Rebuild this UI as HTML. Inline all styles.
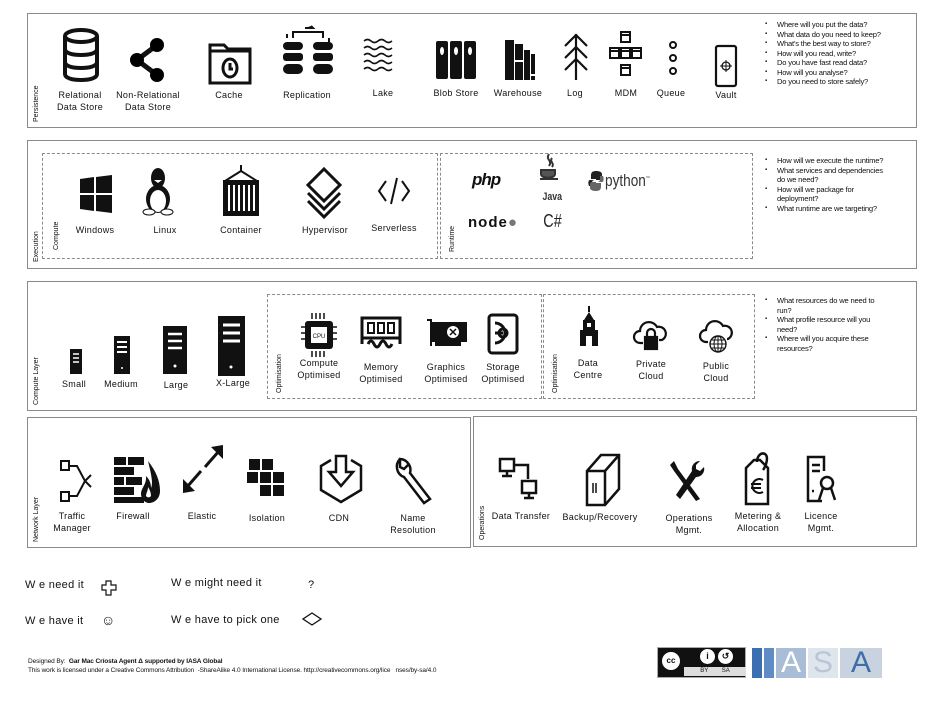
<!DOCTYPE html>
<html><head><meta charset="utf-8"><style>
*{margin:0;padding:0;box-sizing:border-box}
body{width:938px;height:703px;background:#fff;position:relative;overflow:hidden;font-family:"Liberation Sans",sans-serif;color:#111}
.box{position:absolute;border:1.5px solid #8a8a8a}
.dash{position:absolute;border:1px dashed #8a8a8a}
.l{position:absolute;font-size:9px;text-align:center;line-height:12px;transform:translateX(-50%);white-space:nowrap;letter-spacing:.3px}
.v{position:absolute;font-size:7px;transform:rotate(-90deg);transform-origin:left top;white-space:nowrap}
svg{position:absolute;overflow:visible}
ul{position:absolute;font-size:7.6px;line-height:9.5px;list-style:none;letter-spacing:-.2px}
ul li:before{content:"\25AA";position:absolute;left:-12px;font-size:6px}
ul li{position:relative}
.t{position:absolute;font-size:11px;letter-spacing:.3px;white-space:nowrap}
</style></head><body>

<div class="box" style="left:27px;top:13px;width:890px;height:115px"></div>
<div class="box" style="left:27px;top:140px;width:890px;height:129px"></div>
<div class="dash" style="left:42px;top:153px;width:396px;height:106px"></div>
<div class="dash" style="left:440px;top:153px;width:313px;height:106px"></div>
<div class="box" style="left:27px;top:281px;width:890px;height:130px"></div>
<div class="dash" style="left:267px;top:294px;width:275px;height:105px"></div>
<div class="dash" style="left:543px;top:294px;width:212px;height:105px"></div>
<div class="box" style="left:27px;top:417px;width:444px;height:131px"></div>
<div class="box" style="left:473px;top:416px;width:444px;height:131px"></div>

<div class="v" style="left:33px;top:122px">Persistence</div>
<div class="v" style="left:33px;top:262px">Execution</div>
<div class="v" style="left:53px;top:250px">Compute</div>
<div class="v" style="left:449px;top:252px">Runtime</div>
<div class="v" style="left:33px;top:405px">Compute Layer</div>
<div class="v" style="left:276px;top:393px">Optimisation</div>
<div class="v" style="left:552px;top:393px">Optimisation</div>
<div class="v" style="left:33px;top:542px">Network Layer</div>
<div class="v" style="left:479px;top:540px">Operations</div>

<!-- Persistence icons -->
<svg style="left:62px;top:28px" width="38" height="54" viewBox="0 0 38 54" fill="none" stroke="#111" stroke-width="4"><ellipse cx="19" cy="8" rx="16" ry="6"/><path d="M3 8v38c0 4 7 6 16 6s16-2 16-6V8M3 21c0 4 7 6 16 6s16-2 16-6M3 34c0 4 7 6 16 6s16-2 16-6"/></svg>
<svg style="left:130px;top:38px" width="34" height="44" viewBox="0 0 34 44"><path d="M27 7L7 22l20 15" stroke="#111" stroke-width="5" fill="none"/><circle cx="27" cy="7" r="7"/><circle cx="7" cy="22" r="7"/><circle cx="27" cy="37" r="7"/></svg>
<svg style="left:208px;top:41px" width="44" height="44" viewBox="0 0 44 44" fill="none" stroke="#111" stroke-width="3"><path d="M2 4h14l4 4h22v34H2z"/><path d="M2 10h40"/><ellipse cx="22" cy="27" rx="7" ry="9"/><path d="M22 22v6h3"/></svg>
<svg style="left:281px;top:26px" width="54" height="56" viewBox="0 0 54 56"><path d="M12 12V6h30v6" stroke="#111" stroke-width="2" fill="none"/><path d="M24 2h8l-2-2M6 12v-4M48 12v4" stroke="#111" stroke-width="2"/><g fill="#111"><rect x="2" y="16" width="20" height="8" rx="4"/><rect x="2" y="27" width="20" height="8" rx="3"/><rect x="2" y="38" width="20" height="10" rx="5"/><rect x="32" y="16" width="20" height="8" rx="4"/><rect x="32" y="27" width="20" height="8" rx="3"/><rect x="32" y="38" width="20" height="10" rx="5"/></g></svg>
<svg style="left:363px;top:38px" width="32" height="32" viewBox="0 0 32 32" fill="none" stroke="#111" stroke-width="1.6"><path d="M1 3q3.5-3 7 0t7 0 7 0 7 0M1 10q3.5-3 7 0t7 0 7 0 7 0M1 17q3.5-3 7 0t7 0 7 0 7 0M1 24q3.5-3 7 0t7 0 7 0 7 0M1 31q3.5-3 7 0t7 0 7 0 7 0"/></svg>
<svg style="left:436px;top:41px" width="40" height="38" viewBox="0 0 40 38"><g fill="#111"><rect x="0" y="0" width="12" height="38" rx="2"/><rect x="14" y="0" width="12" height="38" rx="2"/><rect x="28" y="0" width="12" height="38" rx="2"/></g><g fill="#fff"><ellipse cx="6" cy="10" rx="2" ry="4"/><ellipse cx="20" cy="10" rx="2" ry="4"/><ellipse cx="34" cy="10" rx="2" ry="4"/></g></svg>
<svg style="left:505px;top:40px" width="30" height="40" viewBox="0 0 30 40" fill="#111"><rect x="0" y="0" width="9" height="40"/><rect x="10" y="4" width="8" height="36"/><rect x="19" y="10" width="6" height="30"/><rect x="26" y="14" width="4" height="20"/><rect x="26" y="36" width="4" height="4"/><rect x="9" y="20" width="10" height="2" fill="#fff"/></svg>
<svg style="left:562px;top:32px" width="28" height="48" viewBox="0 0 28 48" fill="none" stroke="#111" stroke-width="2.2"><path d="M14 2v46M3 14L14 3l11 11M3 26l11-11 11 11M3 38l11-11 11 11"/></svg>
<svg style="left:609px;top:31px" width="34" height="46" viewBox="0 0 34 46" fill="none" stroke="#111" stroke-width="2"><rect x="12" y="1" width="9" height="10"/><rect x="1" y="17" width="9" height="10"/><rect x="12" y="17" width="9" height="10"/><rect x="23" y="17" width="9" height="10"/><rect x="12" y="34" width="9" height="10"/><path d="M12 4h9M12 20h9M1 20h9M23 20h9M12 37h9" /></svg>
<svg style="left:668px;top:41px" width="10" height="36" viewBox="0 0 10 36" fill="none" stroke="#111" stroke-width="2"><circle cx="5" cy="4" r="3"/><circle cx="5" cy="17" r="3"/><circle cx="5" cy="30" r="3"/></svg>
<svg style="left:714px;top:44px" width="24" height="44" viewBox="0 0 24 44" fill="none" stroke="#111" stroke-width="2.2"><rect x="2" y="2" width="20" height="40" rx="2"/><circle cx="12" cy="22" r="4" stroke-width="1.3"/><path d="M12 16v12M6 22h12" stroke-width="1"/></svg>

<div class="l" style="left:80px;top:89px">Relational<br>Data Store</div>
<div class="l" style="left:148px;top:89px">Non-Relational<br>Data Store</div>
<div class="l" style="left:229px;top:89px">Cache</div>
<div class="l" style="left:307px;top:89px">Replication</div>
<div class="l" style="left:383px;top:87px">Lake</div>
<div class="l" style="left:456px;top:87px">Blob Store</div>
<div class="l" style="left:518px;top:87px">Warehouse</div>
<div class="l" style="left:575px;top:87px">Log</div>
<div class="l" style="left:626px;top:87px">MDM</div>
<div class="l" style="left:671px;top:87px">Queue</div>
<div class="l" style="left:726px;top:89px">Vault</div>

<ul style="left:777px;top:20px"><li>Where will you put the data?</li><li>What data do you need to keep?</li><li>What’s the best way to store?</li><li>How will you read, write?</li><li>Do you have fast read data?</li><li>How will you analyse?</li><li>Do you need to store safely?</li></ul>

<!-- Execution -->
<svg style="left:80px;top:175px" width="32" height="38" viewBox="0 0 32 38" fill="#111"><path d="M0 4l14-2v16H0zM16 2l16-2v18H16zM0 20h14v16L0 34zM16 20h16v18l-16-2z"/></svg>
<svg style="left:143px;top:166px" width="30" height="50" viewBox="0 0 30 50"><ellipse cx="15" cy="12" rx="7" ry="10" fill="#111"/><ellipse cx="15" cy="33" rx="12" ry="14" fill="#111"/><ellipse cx="15" cy="35" rx="8" ry="11" fill="#fff"/><ellipse cx="6" cy="46" rx="6" ry="3" fill="#fff" stroke="#111"/><ellipse cx="24" cy="46" rx="6" ry="3" fill="#fff" stroke="#111"/><path d="M11 14h8l-4 3z" fill="#fff"/></svg>
<svg style="left:222px;top:165px" width="38" height="52" viewBox="0 0 38 52" fill="none" stroke="#111" stroke-width="2"><path d="M19 0v6M19 6L3 16M19 6l16 10"/><rect x="2" y="16" width="34" height="34" fill="#111"/><path d="M7 20v26M12 20v26M17 20v26M22 20v26M27 20v26M32 20v26" stroke="#fff" stroke-width="2"/></svg>
<svg style="left:304px;top:167px" width="40" height="52" viewBox="0 0 40 52" fill="none" stroke="#111" stroke-width="3"><path d="M20 2L36 18 20 34 4 18z"/><path d="M4 26l16 16 16-16M4 34l16 16 16-16"/></svg>
<svg style="left:377px;top:176px" width="34" height="30" viewBox="0 0 34 30" fill="none" stroke="#111" stroke-width="2"><path d="M9 5L2 15l7 10M25 5l7 10-7 10M20 2l-6 26"/></svg>
<div class="l" style="left:95px;top:224px">Windows</div>
<div class="l" style="left:165px;top:224px">Linux</div>
<div class="l" style="left:241px;top:224px">Container</div>
<div class="l" style="left:325px;top:224px">Hypervisor</div>
<div class="l" style="left:394px;top:222px">Serverless</div>

<div style="position:absolute;left:472px;top:170px;font:italic bold 17px 'Liberation Sans',sans-serif;letter-spacing:-1px">php</div>
<svg style="left:538px;top:154px" width="22" height="30" viewBox="0 0 22 30" fill="none" stroke="#333" stroke-width="2"><path d="M11 0c-4 6 4 6 0 12M14 4c-3 4 3 5 0 9"/><path d="M3 16h14v4c0 5-14 5-14 0z" fill="#555"/><path d="M2 25h18"/></svg>
<div style="position:absolute;left:540px;top:191px;font:bold 11px 'Liberation Sans',sans-serif;color:#333;transform:scaleX(.8)">Java</div>
<svg style="left:588px;top:171px" width="16" height="20" viewBox="0 0 16 20"><path d="M8 0c-5 0-5 3-5 5v3h5v1H2C0 9 0 13 1 15h3v-3c0-2 1-3 3-3h5c1 0 2-1 2-2V3C14 1 11 0 8 0z" fill="#222"/><path d="M8 20c5 0 5-3 5-5v-3H8v-1h6c2 0 2-4 1-6h-3v3c0 2-1 3-3 3H4c-1 0-2 1-2 2v4c0 2 3 3 6 3z" fill="#666"/></svg>
<div style="position:absolute;left:605px;top:171px;font:17px 'Liberation Sans',sans-serif;color:#333;transform:scaleX(.8);transform-origin:left">python<sup style="font-size:5px">™</sup></div>
<div style="position:absolute;left:468px;top:214px;font:bold 15px 'Liberation Sans',sans-serif;letter-spacing:1px;color:#111">node<span style="color:#777">●</span></div>
<div style="position:absolute;left:541px;top:211px;font:18px 'Liberation Sans',sans-serif;color:#222;transform:scaleX(.8)">C#</div>

<ul style="left:777px;top:156px"><li>How will we execute the runtime?</li><li>What services and dependencies<br>do we need?</li><li>How will we package for<br>deployment?</li><li>What runtime are we targeting?</li></ul>

<!-- Compute layer -->
<svg style="left:70px;top:349px" width="12" height="25" viewBox="0 0 12 25"><rect width="12" height="25" fill="#111"/><path d="M3 5h6M3 9h6M3 13h6" stroke="#fff" stroke-width="1.5"/></svg>
<svg style="left:114px;top:336px" width="16" height="38" viewBox="0 0 16 38"><rect width="16" height="38" fill="#111"/><path d="M3 6h10M3 11h10M3 16h10" stroke="#fff" stroke-width="2"/><circle cx="8" cy="32" r="1" fill="#fff"/></svg>
<svg style="left:163px;top:326px" width="24" height="48" viewBox="0 0 24 48"><rect width="24" height="48" fill="#111"/><path d="M5 8h14M5 15h14M5 22h14" stroke="#fff" stroke-width="2.5"/><circle cx="12" cy="40" r="1.5" fill="#fff"/></svg>
<svg style="left:218px;top:316px" width="27" height="60" viewBox="0 0 27 60"><rect width="27" height="60" fill="#111"/><path d="M5 9h17M5 17h17M5 25h17" stroke="#fff" stroke-width="3"/><circle cx="13" cy="51" r="1.5" fill="#fff"/></svg>
<div class="l" style="left:74px;top:378px">Small</div>
<div class="l" style="left:121px;top:378px">Medium</div>
<div class="l" style="left:176px;top:379px">Large</div>
<div class="l" style="left:233px;top:377px">X-Large</div>

<svg style="left:301px;top:313px" width="36" height="44" viewBox="0 0 36 44" fill="#111"><rect x="4" y="8" width="28" height="28" rx="3"/><rect x="10" y="14" width="16" height="16" fill="#fff"/><text x="18" y="25" font-size="6" text-anchor="middle" font-family="Liberation Sans">CPU</text><path d="M11 0v6M15 0v6M19 0v6M23 0v6M11 38v6M15 38v6M19 38v6M23 38v6M0 14h4M0 20h4M0 26h4M32 14h4M32 20h4M32 26h4" stroke="#111" stroke-width="1.5"/></svg>
<svg style="left:360px;top:316px" width="42" height="30" viewBox="0 0 42 30" fill="none" stroke="#111" stroke-width="3"><rect x="2" y="2" width="38" height="20"/><rect x="8" y="7" width="6" height="10" stroke-width="2"/><rect x="18" y="7" width="6" height="10" stroke-width="2"/><rect x="28" y="7" width="6" height="10" stroke-width="2"/><path d="M2 22v6M40 22v6M8 28q3-6 6 0t6 0 6 0 6 0"/></svg>
<svg style="left:425px;top:318px" width="44" height="30" viewBox="0 0 44 30"><path d="M2 2h4v26" stroke="#111" stroke-width="2" fill="none"/><rect x="6" y="4" width="36" height="20" fill="#111"/><circle cx="28" cy="14" r="6" fill="#fff"/><path d="M25 11l6 6M31 11l-6 6" stroke="#111" stroke-width="1.5"/><path d="M10 24v4h26v-4" fill="#111"/></svg>
<svg style="left:487px;top:313px" width="32" height="42" viewBox="0 0 32 42" fill="none" stroke="#111" stroke-width="3"><rect x="2" y="2" width="28" height="38" rx="3"/><path d="M8 10a10 10 0 1 1 0 20" /><circle cx="16" cy="20" r="4"/><path d="M8 20h8"/></svg>
<div class="l" style="left:319px;top:357px">Compute<br>Optimised</div>
<div class="l" style="left:381px;top:361px">Memory<br>Optimised</div>
<div class="l" style="left:446px;top:361px">Graphics<br>Optimised</div>
<div class="l" style="left:503px;top:361px">Storage<br>Optimised</div>

<svg style="left:580px;top:306px" width="18" height="40" viewBox="0 0 18 40" fill="#111"><rect x="8" y="0" width="2" height="6"/><path d="M4 14l5-8 5 8z"/><rect x="3" y="14" width="12" height="10"/><rect x="0" y="24" width="18" height="16"/><rect x="6" y="30" width="6" height="10" fill="#fff"/><rect x="7" y="17" width="4" height="4" fill="#fff"/></svg>
<svg style="left:633px;top:317px" width="36" height="34" viewBox="0 0 36 34" fill="none" stroke="#111" stroke-width="2.2"><path d="M10 26H7a6 6 0 0 1 0-12 9 9 0 0 1 17-4 7 7 0 0 1 5 13h-3"/><rect x="12" y="20" width="12" height="12" fill="#111"/><path d="M14 20v-4a4 4 0 0 1 8 0v4"/></svg>
<svg style="left:699px;top:316px" width="38" height="40" viewBox="0 0 38 40" fill="none" stroke="#111" stroke-width="2.2"><path d="M9 26H7a6 6 0 0 1 0-12 9 9 0 0 1 17-4 7 7 0 0 1 5 13h-1"/><circle cx="19" cy="28" r="8" stroke-width="1.4"/><path d="M11 28h16M19 20v16M13 24h12M13 32h12" stroke-width="1"/><ellipse cx="19" cy="28" rx="4" ry="8" stroke-width="1"/></svg>
<div class="l" style="left:588px;top:357px">Data<br>Centre</div>
<div class="l" style="left:651px;top:358px">Private<br>Cloud</div>
<div class="l" style="left:716px;top:360px">Public<br>Cloud</div>

<ul style="left:777px;top:296px"><li>What resources do we need to<br>run?</li><li>What profile resource will you<br>need?</li><li>Where will you acquire these<br>resources?</li></ul>

<!-- Network -->
<svg style="left:59px;top:459px" width="34" height="44" viewBox="0 0 34 44" fill="none" stroke="#111" stroke-width="2"><rect x="2" y="2" width="8" height="9"/><rect x="2" y="33" width="8" height="9"/><path d="M10 7h8l8 15-8 15h-8M26 22l6-6M26 22l6 6"/></svg>
<svg style="left:114px;top:457px" width="46" height="46" viewBox="0 0 46 46" fill="#111"><rect x="0" y="0" width="12" height="8"/><rect x="14" y="0" width="16" height="8"/><rect x="0" y="10" width="20" height="8"/><rect x="0" y="20" width="10" height="8"/><rect x="12" y="20" width="16" height="8"/><rect x="0" y="30" width="20" height="8"/><rect x="0" y="40" width="30" height="6"/><path d="M34 4c8 10 12 20 12 30 0 7-5 12-11 12-4 0-8-4-8-9 0-6 6-10 5-18 4 4 5 8 5 12 2-4 1-11-3-27z"/><path d="M34 30c2 3 3 6 3 9a3 3 0 0 1-5 0c0-3 2-5 2-9z" fill="#fff"/></svg>
<svg style="left:183px;top:445px" width="40" height="48" viewBox="0 0 40 48" fill="#111"><path d="M22 22L36 6" stroke="#111" stroke-width="3"/><path d="M40 0v14L28 2z"/><path d="M18 26L4 42" stroke="#111" stroke-width="3"/><path d="M0 48V34l12 12z"/></svg>
<svg style="left:247px;top:459px" width="40" height="42" viewBox="0 0 40 42" fill="#111"><rect x="2" y="0" width="11" height="11"/><rect x="15" y="0" width="11" height="11"/><rect x="0" y="13" width="11" height="11"/><rect x="13" y="13" width="11" height="11"/><rect x="26" y="13" width="11" height="11"/><rect x="13" y="26" width="11" height="11"/><rect x="26" y="26" width="11" height="11"/></svg>
<svg style="left:319px;top:454px" width="44" height="50" viewBox="0 0 44 50" fill="none" stroke="#111" stroke-width="2.5"><path d="M12 6L2 12v24l20 12 20-12V12L32 6"/><path d="M17 2h10v16h7L22 32 10 18h7z"/></svg>
<svg style="left:392px;top:455px" width="40" height="52" viewBox="0 0 40 52" fill="none" stroke="#111" stroke-width="2.5"><path d="M8 4a11 11 0 0 0 4 18l20 26 6-4-20-26A11 11 0 0 0 8 4v8l4 2 4-4"/></svg>
<div class="l" style="left:72px;top:510px">Traffic<br>Manager</div>
<div class="l" style="left:133px;top:510px">Firewall</div>
<div class="l" style="left:202px;top:510px">Elastic</div>
<div class="l" style="left:267px;top:512px">Isolation</div>
<div class="l" style="left:339px;top:512px">CDN</div>
<div class="l" style="left:413px;top:512px">Name<br>Resolution</div>

<!-- Operations -->
<svg style="left:498px;top:457px" width="46" height="46" viewBox="0 0 46 46" fill="none" stroke="#111" stroke-width="2.5"><rect x="2" y="2" width="14" height="12"/><path d="M9 14v4M4 19h10M16 8h14v14"/><rect x="24" y="24" width="14" height="12"/><path d="M31 36v4M26 41h10"/></svg>
<svg style="left:585px;top:453px" width="36" height="54" viewBox="0 0 36 54" fill="none" stroke="#111" stroke-width="2.5"><path d="M2 18L16 2h18v34L20 52H2z"/><path d="M2 18h18v34M20 18L34 2"/><path d="M11 30v10M8 30v10" stroke-width="1.5"/></svg>
<svg style="left:670px;top:459px" width="34" height="42" viewBox="0 0 34 42" fill="#111"><path d="M4 2l4 8 22 30-4 2L4 12 0 6z"/><path d="M30 2a8 8 0 0 0-8 10L6 36l4 4 16-22a8 8 0 0 0 8-10l-4 4-4-2v-4z"/></svg>
<svg style="left:742px;top:450px" width="30" height="56" viewBox="0 0 30 56" fill="none" stroke="#111" stroke-width="2.5"><path d="M4 18l8-8h6l8 8v36H4z"/><path d="M15 12c0-6 4-10 8-8 4 3 1 12-2 16"/><path d="M21 30a7 7 0 1 0 0 12M9 34h10M9 38h10" stroke-width="2"/></svg>
<svg style="left:806px;top:455px" width="30" height="50" viewBox="0 0 30 50" fill="none" stroke="#111" stroke-width="2.5"><path d="M16 46H2V2h16v14"/><path d="M6 10h8M6 16h8M6 36h2"/><circle cx="21" cy="28" r="6"/><path d="M17 33l-4 12M25 33l4 12"/></svg>
<div class="l" style="left:521px;top:510px">Data Transfer</div>
<div class="l" style="left:600px;top:511px">Backup/Recovery</div>
<div class="l" style="left:689px;top:512px">Operations<br>Mgmt.</div>
<div class="l" style="left:758px;top:510px">Metering &amp;<br>Allocation</div>
<div class="l" style="left:821px;top:510px">Licence<br>Mgmt.</div>

<!-- Legend -->
<div class="t" style="left:25px;top:579px">W e need it</div>
<svg style="left:101px;top:580px" width="16" height="16" viewBox="0 0 16 16" fill="none" stroke="#111" stroke-width="1.2"><path d="M5 1h5v4h5v5h-5v5H5v-5H1V5h4z"/></svg>
<div class="t" style="left:171px;top:577px">W e might need it</div>
<div class="t" style="left:308px;top:579px">?</div>
<div class="t" style="left:25px;top:615px">W e have it</div>
<div class="t" style="left:101px;top:612px;font-size:14px">☺</div>
<div class="t" style="left:171px;top:614px">W e have to pick one</div>
<svg style="left:302px;top:612px" width="20" height="14" viewBox="0 0 20 14" fill="none" stroke="#111" stroke-width="1.3"><path d="M10 1l9 6-9 6-9-6z"/></svg>

<div style="position:absolute;left:28px;top:657px;font-size:6.5px;line-height:9px;letter-spacing:-.1px">Designed By: &nbsp;<b>Gar Mac Críosta Agent Δ supported by IASA Global</b><br>This work is licensed under a Creative Commons Attribution &nbsp;-ShareAlike 4.0 International License. http://creativecommons.org/lice &nbsp; nses/by-sa/4.0</div>

<div style="position:absolute;left:657px;top:647px;width:89px;height:31px;background:#111;border:1px solid #aaa"></div>
<div style="position:absolute;left:660px;top:650px;width:22px;height:22px;border-radius:50%;background:#fff;border:2px solid #111;font:bold 8px 'Liberation Sans';line-height:18px;text-align:center">cc</div>
<div style="position:absolute;left:700px;top:649px;width:15px;height:15px;border-radius:50%;background:#fff;font:bold 9px 'Liberation Sans';line-height:15px;text-align:center">i</div>
<div style="position:absolute;left:718px;top:649px;width:15px;height:15px;border-radius:50%;background:#fff;font:bold 9px 'Liberation Sans';line-height:15px;text-align:center">↺</div>
<div style="position:absolute;left:684px;top:667px;width:62px;height:9px;background:#ddd;font-size:6px;line-height:9px;text-align:center;word-spacing:12px">BY SA</div>
<div style="position:absolute;left:752px;top:648px;width:10px;height:30px;background:#3b6fb0"></div>
<div style="position:absolute;left:764px;top:648px;width:10px;height:30px;background:#5f8cc4"></div>
<div style="position:absolute;left:776px;top:648px;width:30px;height:30px;background:#a9bdd6;color:#fff;font:30px 'Liberation Sans';line-height:30px;text-align:center">A</div>
<div style="position:absolute;left:808px;top:648px;width:30px;height:30px;background:#dfe5ec;color:#b8c6d6;font:30px 'Liberation Sans';line-height:30px;text-align:center">S</div>
<div style="position:absolute;left:840px;top:648px;width:42px;height:30px;background:#c9d3df;color:#3d6ea8;font:30px 'Liberation Sans';line-height:30px;text-align:center">A</div>
</body></html>
